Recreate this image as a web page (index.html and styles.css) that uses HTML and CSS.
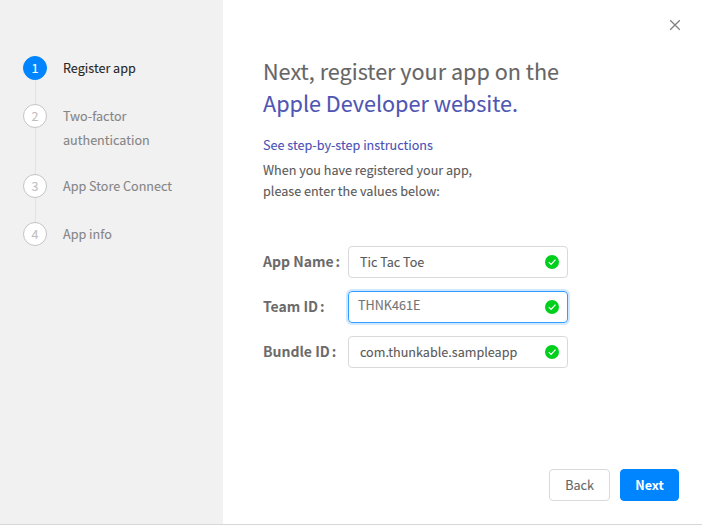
FILE: index.html
```html
<!DOCTYPE html>
<html lang="en">
<head>
<meta charset="utf-8">
<title>Register app</title>
<link rel="stylesheet" href="styles.css">
</head>
<body>
<div class="dialog">
  <aside class="sidebar">
    <ol class="steps">
      <li class="step active"><span class="num">1</span><span class="name">Register app</span></li>
      <li class="step"><span class="num">2</span><span class="name">Two-factor authentication</span></li>
      <li class="step"><span class="num">3</span><span class="name">App Store Connect</span></li>
      <li class="step"><span class="num">4</span><span class="name">App info</span></li>
    </ol>
  </aside>
  <main class="content">
    <button class="close" aria-label="Close"><svg width="12" height="12" viewBox="0 0 12 12"><path d="M1.2 1.2 10.8 10.8M10.8 1.2 1.2 10.8"/></svg></button>
    <h1 class="title">Next, register your app on the<br><a>Apple Developer website.</a></h1>
    <a class="help">See step-by-step instructions</a>
    <p class="intro">When you have registered your app,<br>please enter the values below:</p>
    <form class="form">
      <div class="row"><label>App Name<i>:</i></label><div class="field"><span>Tic Tac Toe</span><svg class="ok" viewBox="0 0 14 14"><circle cx="7" cy="7" r="7"/><path d="M3.8 7.2 6.1 9.5 10.5 4.7"/></svg></div></div>
      <div class="row"><label>Team ID<i>:</i></label><div class="field focused"><span>THNK461E</span><svg class="ok" viewBox="0 0 14 14"><circle cx="7" cy="7" r="7"/><path d="M3.8 7.2 6.1 9.5 10.5 4.7"/></svg></div></div>
      <div class="row"><label>Bundle ID<i>:</i></label><div class="field"><span>com.thunkable.sampleapp</span><svg class="ok" viewBox="0 0 14 14"><circle cx="7" cy="7" r="7"/><path d="M3.8 7.2 6.1 9.5 10.5 4.7"/></svg></div></div>
    </form>
    <div class="actions"><button class="btn back" type="button">Back</button><button class="btn next" type="button">Next</button></div>
  </main>
</div>
</body>
</html>
```
FILE: styles.css
```css
* { box-sizing: border-box; }
body {
  margin: 0;
  overflow: hidden;
  font-family: "Noto Sans CJK SC", "Open Sans", sans-serif;
  font-size: 12.6px;
  color: #595959;
  -webkit-text-stroke: 0.1px;
}
button { font: inherit; cursor: pointer; }
.dialog {
  display: flex;
  width: 702px;
  height: 525px;
  background: #fff;
  border-bottom: 1px solid #d8d8d8;
}
.sidebar { width: 223px; padding: 56px 0 0 23px; background: #f1f1f1; }
.steps { list-style: none; margin: 0; padding: 0; }
.step { position: relative; display: flex; gap: 16px; padding-bottom: 24px; color: #858585; }
.step:nth-child(2) { padding-bottom: 22px; }
.step:not(:last-child)::after {
  content: "";
  position: absolute;
  left: 12px;
  top: 24px;
  bottom: 0;
  width: 1px;
  background: #e2e2e2;
}
.num {
  width: 24px;
  height: 24px;
  flex: none;
  border: 1px solid #c4c4c4;
  border-radius: 50%;
  background: #fff;
  color: #bfbfbf;
  line-height: 21px;
  text-align: center;
}
.active .num { background: #0085ff; border-color: #0085ff; color: #fff; }
.name { width: 120px; line-height: 24px; }
.active .name { color: #262626; }
.content { position: relative; flex: 1; display: flex; flex-direction: column; padding: 55px 23px 23px 40px; }
.close { position: absolute; top: 13px; right: 15px; width: 24px; height: 24px; padding: 6px; border: 0; background: none; }
.close svg { display: block; fill: none; stroke: #808080; stroke-width: 1.3; }
.title { margin: 0; font-size: 21.6px; line-height: 32px; font-weight: 400; color: #666; }
.title a { color: #4f55b3; }
.help { margin-top: 15px; line-height: 21px; color: #4950b5; }
.intro { margin: 4px 0 0; line-height: 21px; }
.form { display: flex; flex-direction: column; gap: 13px; margin-top: 45px; }
.row { display: flex; align-items: center; }
label { width: 85px; font-size: 14px; line-height: 30px; padding-bottom: 2px; font-weight: 700; color: #6b6b6b; white-space: nowrap; -webkit-text-stroke: 0; }
label i { margin-left: 2px; font-style: normal; }
.field {
  display: flex;
  align-items: center;
  justify-content: space-between;
  width: 220px;
  height: 32px;
  padding: 0 8px 0 11px;
  border: 1px solid #d9d9d9;
  border-radius: 4px;
}
.field span { line-height: 20px; padding-bottom: 1px; }
.focused { border-color: #339dff; padding-left: 9px; box-shadow: 0 0 0 2px #cfe7ff; }
.focused span { padding-bottom: 4px; color: #737373; }
.ok { width: 14px; height: 14px; }
.ok circle { fill: #00cf1c; }
.ok path { fill: none; stroke: #fff; stroke-width: 1.2; }
.actions { display: flex; justify-content: flex-end; gap: 10px; margin-top: auto; }
.btn { height: 32px; padding: 0; border-radius: 4px; line-height: 30px; }
.back { width: 61px; border: 1px solid #d9d9d9; background: #fff; color: #666; }
.next { width: 59px; border: 1px solid #0085ff; background: #0085ff; color: #fff; font-weight: 700; -webkit-text-stroke: 0; }
```
